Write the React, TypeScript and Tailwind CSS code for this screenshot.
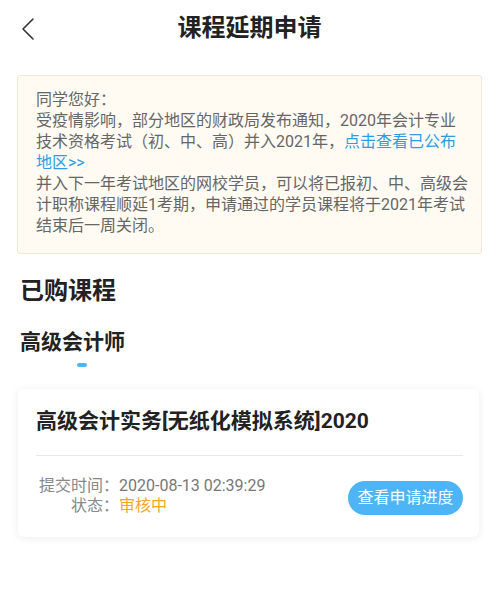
import React from "react";

const font = { fontFamily: 'Roboto, "Noto Sans CJK SC", sans-serif' };

export default function App() {
  return (
    <div className="w-[499px] h-[599px] bg-white overflow-hidden" style={font}>
      {/* Header */}
      <div className="relative h-[55px] flex items-center justify-center">
        <svg className="absolute left-[20px] top-[17px]" width="16" height="24" viewBox="0 0 16 24" fill="none">
          <path d="M13 2 L3 12 L13 22" stroke="#333" strokeWidth="1.6" strokeLinecap="round" strokeLinejoin="round" />
        </svg>
        <div className="text-[24px] font-bold text-[#222] leading-none">课程延期申请</div>
      </div>

      {/* Notice */}
      <div className="mx-[17px] mt-[20px] h-[179px] rounded-[3px] border border-[#f1e8d4] bg-[#fffbf3] pl-[18px] pr-[10px] pt-[13px] text-[16px] leading-[21px] text-[#666]">
        <p>同学您好：</p>
        <p>
          受疫情影响，部分地区的财政局发布通知，2020年会计专业技术资格考试（初、中、高）并入2021年，
          <span className="text-[#2d9be6]">点击查看已公布地区&gt;&gt;</span>
        </p>
        <p>并入下一年考试地区的网校学员，可以将已报初、中、高级会计职称课程顺延1考期，申请通过的学员课程将于2021年考试结束后一周关闭。</p>
      </div>

      {/* Purchased courses */}
      <div className="mt-[22px] pl-[20px] text-[24px] leading-[30px] font-bold text-[#222]">已购课程</div>
      <div className="mt-[22px] pl-[20px] text-[21px] leading-[28px] font-bold text-[#222]">高级会计师</div>
      <div className="ml-[77px] mt-[7px] w-[10px] h-[4px] rounded-full bg-[#4db5f5]" />

      {/* Card */}
      <div className="ml-[18px] w-[461px] mt-[22px] h-[148px] rounded-[6px] bg-white shadow-[0_1px_8px_rgba(0,0,0,0.08)] pl-[18px] pr-[16px] pt-[18px]">
        <div className="text-[21px] leading-[28px] font-bold text-[#222] whitespace-nowrap">高级会计实务[无纸化模拟系统]2020</div>
        <div className="mt-[20px] h-px bg-[#e8e8e8]" />
        <div className="mt-[20px] flex items-start justify-between">
          <div className="text-[16px] leading-[20px]">
            <div className="flex">
              <span className="w-[83px] text-right text-[#888] whitespace-nowrap">提交时间：</span>
              <span className="text-[#777]">2020-08-13 02:39:29</span>
            </div>
            <div className="flex">
              <span className="w-[83px] text-right text-[#888]">状态：</span>
              <span className="text-[#f5a623]">审核中</span>
            </div>
          </div>
          <div className="mt-[5px] w-[115px] h-[34px] rounded-full bg-[#4db5f5] flex items-center justify-center text-white text-[16px]">
            查看申请进度
          </div>
        </div>
      </div>
    </div>
  );
}
